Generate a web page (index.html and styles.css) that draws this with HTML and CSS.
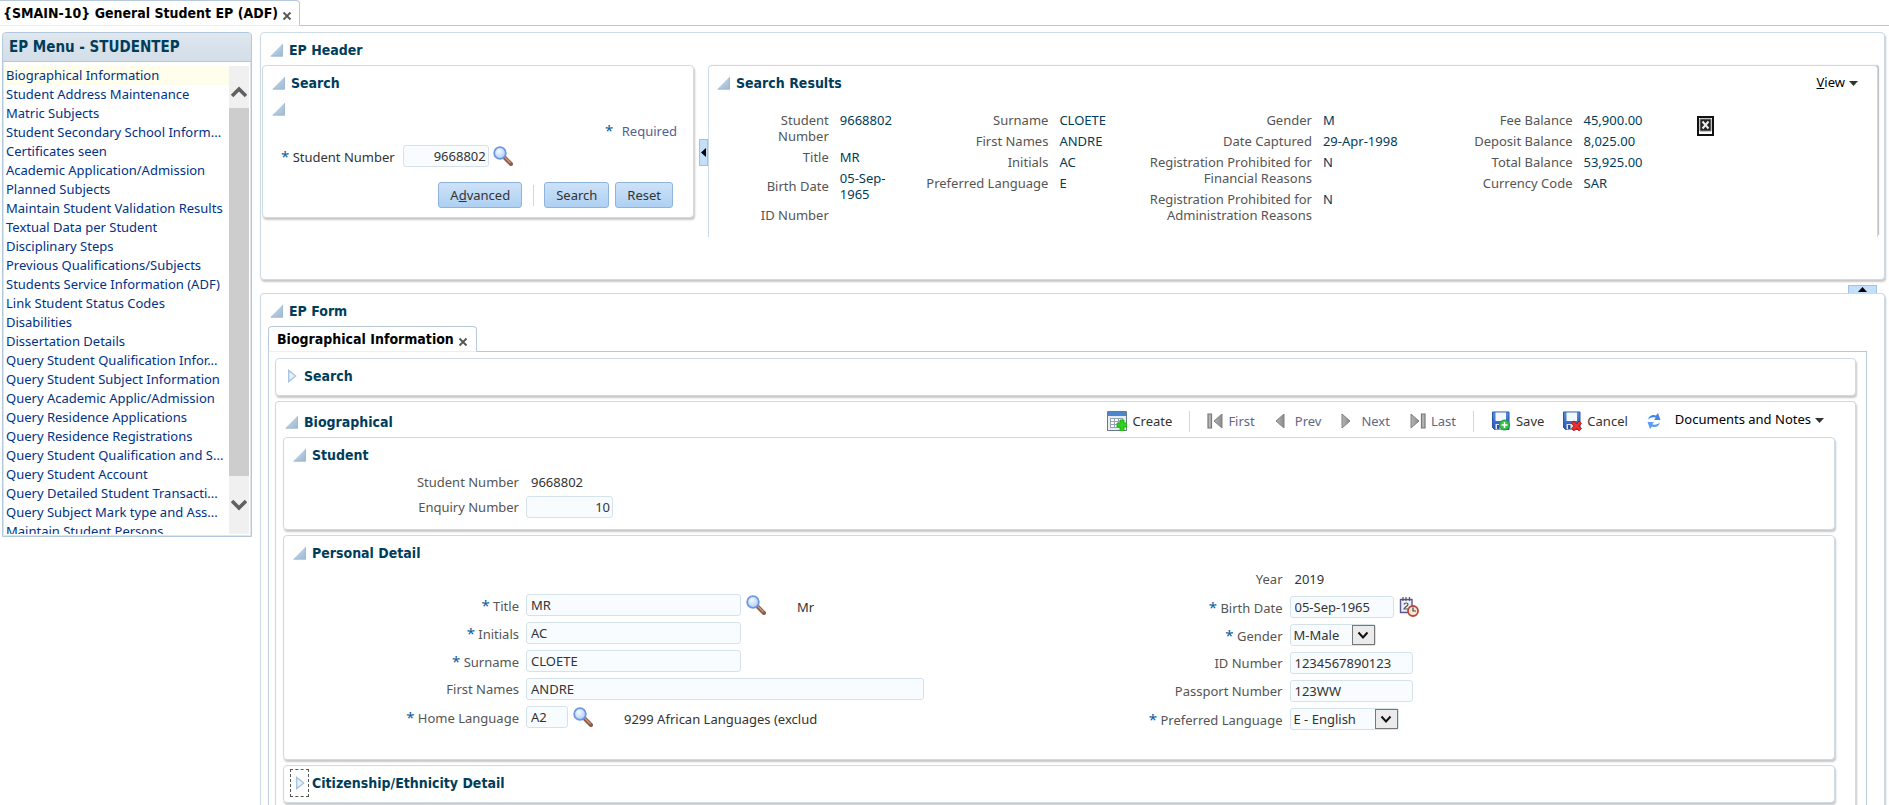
FILE: index.html
```html
<!DOCTYPE html>
<html lang="en">
<head>
<meta charset="utf-8">
<title>General Student EP (ADF)</title>
<link rel="stylesheet" href="styles.css">
</head>
<body>
<svg class="defs" aria-hidden="true">
  <defs>
    <linearGradient id="g-tri" x1="0" y1="0" x2="1" y2="1"><stop offset="0.3" stop-color="#b9d5ee"/><stop offset="1" stop-color="#a3b6c6"/></linearGradient>
    <linearGradient id="g-disk" x1="0" y1="0" x2="0" y2="1"><stop offset="0" stop-color="#5b8fe0"/><stop offset="1" stop-color="#2253b4"/></linearGradient>
    <radialGradient id="g-lens" cx="0.4" cy="0.35" r="0.7"><stop offset="0" stop-color="#f4f9ff"/><stop offset="1" stop-color="#a9cbf8"/></radialGradient>
    <linearGradient id="g-nav" x1="0" y1="0" x2="1" y2="0"><stop offset="0" stop-color="#b4b4b4"/><stop offset="1" stop-color="#8c8c8c"/></linearGradient>
  </defs>
  <symbol id="i-open" viewBox="0 0 13 13"><path d="M13 0V13H0Z" fill="url(#g-tri)"/><path d="M12.5 1V12.5H1" fill="none" stroke="#9dbbd8"/></symbol>
  <symbol id="i-closed" viewBox="0 0 13 15"><path d="M3.5 1.5V13.5L11 7.500Z" fill="#eef1f4" stroke="#a3c3e4" stroke-width="1.400"/></symbol>
  <symbol id="i-x" viewBox="0 0 10 10"><path d="M1.500 1.500L8.500 8.500M8.500 1.500L1.500 8.500" stroke="#555" stroke-width="1.800"/></symbol>
  <symbol id="i-lens" viewBox="0 0 20 20"><path d="M11.500 11.500L18 18" stroke="#8d5a48" stroke-width="4" stroke-linecap="round"/><path d="M12 11.500L17.500 17" stroke="#c99a86" stroke-width="1.300"/><circle cx="7" cy="7" r="5.800" fill="url(#g-lens)" stroke="#6f96e0" stroke-width="1.800"/></symbol>
  <symbol id="i-caret" viewBox="0 0 9 5"><path d="M0 0H9L4.500 5Z" fill="#333"/></symbol>
  <symbol id="i-create" viewBox="0 0 20 20"><path d="M.5 .5H19.500V19.500H.5Z" fill="#e8edf2" stroke="#66788a"/><path d="M1 1H19V5H1Z" fill="#4d86cc"/><path d="M3 7H16V17H3Z" fill="#fff"/><path d="M3 7.500H16M3 10.500H16M3 13.500H16M3 16.500H14M3.500 7V17M7.500 7V17M11.500 7V17M15.500 7V11" stroke="#94a3b3"/><path d="M13 9H17V12H20V16H17V20H13V16H10V12H13Z" fill="#2fd11b" stroke="#1ba50e" stroke-width=".8"/></symbol>
  <symbol id="i-first" viewBox="0 0 16 16"><path d="M1 1H4.500V15H1Z" fill="#b4b4b4" stroke="#777" stroke-width="1.200"/><path d="M15 1V15L7 8Z" fill="url(#g-nav)" stroke="#808080"/></symbol>
  <symbol id="i-last" viewBox="0 0 16 16"><path d="M11.500 1H15V15H11.500Z" fill="#b4b4b4" stroke="#777" stroke-width="1.200"/><path d="M1 1V15L9 8Z" fill="url(#g-nav)" stroke="#808080"/></symbol>
  <symbol id="i-prev" viewBox="0 0 10 16"><path d="M9 1V15L1 8Z" fill="url(#g-nav)" stroke="#808080"/></symbol>
  <symbol id="i-next" viewBox="0 0 10 16"><path d="M1 1V15L9 8Z" fill="url(#g-nav)" stroke="#808080"/></symbol>
  <symbol id="i-disk" viewBox="0 0 19 20"><path d="M1 1H17.500V18.500H3L1 16.500Z" fill="url(#g-disk)" stroke="#2a55a8"/><path d="M4 1.500H14.500V10H4Z" fill="#f3f8ff"/><path d="M4 13H12V18.500H4Z" fill="#dfe5ee"/><path d="M5.500 14H8V18H5.500Z" fill="#2b4f9e"/></symbol>
  <symbol id="i-refresh" viewBox="0 0 16 18"><path d="M2 7.500C3 3.500 7 2 10 3.500L12 1L14.500 8H8L9.800 5.800C7 4.800 4.500 5.500 2 7.500Z" fill="#3f86ec"/><path d="M14 10.500C13 14.500 9 16 6 14.500L4 17L1.500 10H8L6.200 12.200C9 13.200 11.500 12.500 14 10.500Z" fill="#5b9cf4"/></symbol>
  <symbol id="i-date" viewBox="0 0 20 20"><path d="M1.500 2.500H13V15.500H1.500Z" fill="#eeeef8" stroke="#565a94" stroke-width="1.400"/><path d="M4 0V4M7 0V4M10.500 0V4" stroke="#555" stroke-width="1.200"/><path d="M5 7.500C5.500 5.500 9 5.500 9 7.500C9 9 5.500 10 5 12H9" fill="none" stroke="#555" stroke-width="1.200"/><circle cx="14" cy="14" r="5" fill="#fbe9d4" stroke="#b44a3c" stroke-width="1.800"/><path d="M14 10.500V14H17" fill="none" stroke="#444" stroke-width="1.200"/></symbol>
  <symbol id="i-broken" viewBox="0 0 17 20"><path d="M1 1H16V19H1Z" fill="#fff" stroke="#111" stroke-width="2"/><path d="M3 3H14V15H3Z" fill="#222" stroke="#888"/><path d="M5.500 5.500L11.500 12.500M11.500 5.500L5.500 12.500" stroke="#eee" stroke-width="2"/></symbol>
  <symbol id="i-up" viewBox="0 0 16 12"><path d="M1 10L8 3L15 10" fill="none" stroke="#606060" stroke-width="3.600"/></symbol>
  <symbol id="i-down" viewBox="0 0 16 12"><path d="M1 2L8 9L15 2" fill="none" stroke="#606060" stroke-width="3.600"/></symbol>
  <symbol id="i-drop" viewBox="0 0 12 8"><path d="M1.500 1.500L6 6.500L10.500 1.500" fill="none" stroke="#111" stroke-width="2"/></symbol>
</svg>

<div class="tabs">
  <div class="tab tab-page"><span>{SMAIN-10} General Student EP (ADF)</span><button class="plain" aria-label="Close page"><svg class="x"><use href="#i-x"/></svg></button></div>
  <div class="tab-rest"></div>
</div>

<div class="page">
  <nav class="menu" aria-labelledby="menu-title">
    <h1 id="menu-title">EP Menu - STUDENTEP</h1>
    <div class="menu-body">
      <ul>
        <li class="current"><a href="#">Biographical Information</a></li>
        <li><a href="#">Student Address Maintenance</a></li>
        <li><a href="#">Matric Subjects</a></li>
        <li><a href="#">Student Secondary School Inform...</a></li>
        <li><a href="#">Certificates seen</a></li>
        <li><a href="#">Academic Application/Admission</a></li>
        <li><a href="#">Planned Subjects</a></li>
        <li><a href="#">Maintain Student Validation Results</a></li>
        <li><a href="#">Textual Data per Student</a></li>
        <li><a href="#">Disciplinary Steps</a></li>
        <li><a href="#">Previous Qualifications/Subjects</a></li>
        <li><a href="#">Students Service Information (ADF)</a></li>
        <li><a href="#">Link Student Status Codes</a></li>
        <li><a href="#">Disabilities</a></li>
        <li><a href="#">Dissertation Details</a></li>
        <li><a href="#">Query Student Qualification Infor...</a></li>
        <li><a href="#">Query Student Subject Information</a></li>
        <li><a href="#">Query Academic Applic/Admission</a></li>
        <li><a href="#">Query Residence Applications</a></li>
        <li><a href="#">Query Residence Registrations</a></li>
        <li><a href="#">Query Student Qualification and S...</a></li>
        <li><a href="#">Query Student Account</a></li>
        <li><a href="#">Query Detailed Student Transacti...</a></li>
        <li><a href="#">Query Subject Mark type and Ass...</a></li>
        <li><a href="#">Maintain Student Persons</a></li>
      </ul>
      <div class="scroll">
        <button class="plain scroll-up" aria-label="Scroll up"><svg><use href="#i-up"/></svg></button>
        <div class="thumb"></div>
        <button class="plain scroll-down" aria-label="Scroll down"><svg><use href="#i-down"/></svg></button>
      </div>
    </div>
  </nav>

  <main>
    <section class="panel ep-header">
      <h2><button class="plain" aria-label="Collapse EP Header"><svg class="tri"><use href="#i-open"/></svg></button>EP Header</h2>
      <div class="split">
        <form class="panel search">
          <h2><button type="button" class="plain" aria-label="Collapse Search"><svg class="tri"><use href="#i-open"/></svg></button>Search</h2>
          <div class="sub"><button type="button" class="plain" aria-label="Collapse criteria"><svg class="tri"><use href="#i-open"/></svg></button></div>
          <p class="required"><b>*</b> Required</p>
          <div class="criteria">
            <label for="q-student"><b>*</b> Student Number</label>
            <input id="q-student" class="num" value="9668802">
            <button type="button" class="plain" aria-label="Look up student number"><svg class="lens"><use href="#i-lens"/></svg></button>
          </div>
          <div class="buttons">
            <button type="button"><span>A<u>d</u>vanced</span></button>
            <i class="sep"></i>
            <button type="button">Search</button>
            <button type="button">Reset</button>
          </div>
        </form>
        <div class="splitter"><button class="plain" aria-label="Collapse search pane"><svg viewBox="0 0 5 9"><path d="M5 0V9L0 4.500Z"/></svg></button></div>
        <section class="panel results">
          <div class="head">
            <h2><button class="plain" aria-label="Collapse Search Results"><svg class="tri"><use href="#i-open"/></svg></button>Search Results</h2>
            <button class="plain dropdown"><span><u>V</u>iew</span><svg class="caret"><use href="#i-caret"/></svg></button>
          </div>
          <div class="facts">
            <dl class="c1">
              <div><dt>Student Number</dt><dd>9668802</dd></div>
              <div><dt>Title</dt><dd>MR</dd></div>
              <div class="mid"><dt>Birth Date</dt><dd>05-Sep-1965</dd></div>
              <div><dt>ID Number</dt><dd></dd></div>
            </dl>
            <dl class="c2">
              <div><dt>Surname</dt><dd>CLOETE</dd></div>
              <div><dt>First Names</dt><dd>ANDRE</dd></div>
              <div><dt>Initials</dt><dd>AC</dd></div>
              <div><dt>Preferred Language</dt><dd>E</dd></div>
            </dl>
            <dl class="c3">
              <div><dt>Gender</dt><dd>M</dd></div>
              <div><dt>Date Captured</dt><dd>29-Apr-1998</dd></div>
              <div><dt>Registration Prohibited for Financial Reasons</dt><dd>N</dd></div>
              <div><dt>Registration Prohibited for Administration Reasons</dt><dd>N</dd></div>
            </dl>
            <dl class="c4">
              <div><dt>Fee Balance</dt><dd>45,900.00</dd></div>
              <div><dt>Deposit Balance</dt><dd>8,025.00</dd></div>
              <div><dt>Total Balance</dt><dd>53,925.00</dd></div>
              <div><dt>Currency Code</dt><dd>SAR</dd></div>
            </dl>
            <div class="photo"><svg role="img" aria-label="Photo not available"><use href="#i-broken"/></svg></div>
          </div>
        </section>
      </div>
    </section>

    <div class="fold"><button class="plain" aria-label="Collapse header pane"><svg viewBox="0 0 9 5"><path d="M0 5H9L4.500 0Z"/></svg></button></div>

    <section class="panel ep-form">
      <h2><button class="plain" aria-label="Collapse EP Form"><svg class="tri"><use href="#i-open"/></svg></button>EP Form</h2>
      <div class="form-area">
        <div class="tabs">
          <div class="tab tab-form"><span>Biographical Information</span><button class="plain" aria-label="Close tab"><svg class="x"><use href="#i-x"/></svg></button></div>
          <div class="tab-rest"></div>
        </div>
        <div class="tab-body">
          <section class="panel closed">
            <h2><button class="plain" aria-label="Expand Search"><svg class="tri"><use href="#i-closed"/></svg></button>Search</h2>
          </section>

          <section class="panel bio">
            <div class="head bar">
              <h2><button class="plain" aria-label="Collapse Biographical"><svg class="tri"><use href="#i-open"/></svg></button>Biographical</h2>
              <div class="toolbar" role="toolbar" aria-label="Record actions">
                <button class="plain t-create"><svg class="w20"><use href="#i-create"/></svg>Create</button>
                <i class="sep"></i>
                <div class="nav">
                  <button class="plain" disabled><svg class="w16"><use href="#i-first"/></svg>First</button>
                  <button class="plain slim" disabled><svg class="w10"><use href="#i-prev"/></svg>Prev</button>
                  <button class="plain slim" disabled><svg class="w10"><use href="#i-next"/></svg>Next</button>
                  <button class="plain" disabled><svg class="w16"><use href="#i-last"/></svg>Last</button>
                </div>
                <i class="sep"></i>
                <div class="edit">
                  <button class="plain"><svg class="w20" viewBox="0 0 19 20"><use href="#i-disk"/><circle cx="13" cy="14" r="5" fill="#34c04c" stroke="#1c9c34"/><path d="M13 11V17M10 14H16" stroke="#fff" stroke-width="1.500"/></svg>Save</button>
                  <button class="plain"><svg class="w20" viewBox="0 0 19 20"><use href="#i-disk"/><path d="M10 11L18 19M18 11L10 19" stroke="#b51616" stroke-width="4"/><path d="M10.500 11.500L17.500 18.500M17.500 11.500L10.500 18.500" stroke="#f03232" stroke-width="2.400"/></svg>Cancel</button>
                  <button class="plain" aria-label="Refresh"><svg class="w16 tall"><use href="#i-refresh"/></svg></button>
                </div>
                <button class="plain dropdown docs"><span>Documents and Notes</span><svg class="caret"><use href="#i-caret"/></svg></button>
              </div>
            </div>

            <section class="panel student">
              <h2><button class="plain" aria-label="Collapse Student"><svg class="tri"><use href="#i-open"/></svg></button>Student</h2>
              <div class="fields tight">
                <div class="field"><span class="label">Student Number</span><output>9668802</output></div>
                <div class="field"><label for="enquiry">Enquiry Number</label><input id="enquiry" class="num" value="10"></div>
              </div>
            </section>

            <section class="panel personal">
              <h2><button class="plain" aria-label="Collapse Personal Detail"><svg class="tri"><use href="#i-open"/></svg></button>Personal Detail</h2>
              <div class="columns">
                <div class="fields left">
                  <div class="field"><label for="title"><b>*</b> Title</label><input id="title" class="w-long" value="MR"><button class="plain" aria-label="Look up title"><svg class="lens"><use href="#i-lens"/></svg></button><output class="note">Mr</output></div>
                  <div class="field"><label for="initials"><b>*</b> Initials</label><input id="initials" class="w-long" value="AC"></div>
                  <div class="field"><label for="surname"><b>*</b> Surname</label><input id="surname" class="w-long" value="CLOETE"></div>
                  <div class="field"><label for="names">First Names</label><input id="names" class="w-full" value="ANDRE"></div>
                  <div class="field"><label for="lang"><b>*</b> Home Language</label><input id="lang" class="w-code" value="A2"><button class="plain" aria-label="Look up language"><svg class="lens"><use href="#i-lens"/></svg></button><output class="note">9299 African Languages (exclud</output></div>
                </div>
                <div class="fields right">
                  <div class="field"><span class="label">Year</span><output>2019</output></div>
                  <div class="field"><label for="birth"><b>*</b> Birth Date</label><input id="birth" class="w-date" value="05-Sep-1965"><button class="plain" aria-label="Pick a date"><svg class="lens"><use href="#i-date"/></svg></button></div>
                  <div class="field"><label for="gender"><b>*</b> Gender</label><span class="pick"><select id="gender" class="w-gender"><option>M-Male</option></select><span class="pick-btn"><svg><use href="#i-drop"/></svg></span></span></div>
                  <div class="field"><label for="idno">ID Number</label><input id="idno" class="w-id" value="1234567890123"></div>
                  <div class="field"><label for="passport">Passport Number</label><input id="passport" class="w-id" value="123WW"></div>
                  <div class="field"><label for="pref"><b>*</b> Preferred Language</label><span class="pick"><select id="pref" class="w-pref"><option>E - English</option></select><span class="pick-btn"><svg><use href="#i-drop"/></svg></span></span></div>
                </div>
              </div>
            </section>

            <section class="panel closed citizen">
              <h2><button class="plain focused" aria-label="Expand Citizenship/Ethnicity Detail"><svg class="tri"><use href="#i-closed"/></svg></button>Citizenship/Ethnicity Detail</h2>
            </section>
          </section>
        </div>
      </div>
    </section>
  </main>
</div>
</body>
</html>
```
FILE: styles.css
```css
* { box-sizing: border-box; }

body {
  margin: 0;
  height: 100vh;
  overflow: hidden;
  display: flex;
  flex-direction: column;
  background: #fff;
  color: #333;
  font: 13px/16px "Noto Sans", "Open Sans", sans-serif;
}

h1, h2, p, ul, dl, dt, dd { margin: 0; padding: 0; }
ul { list-style: none; }
svg { display: block; flex: none; }
button, input, select { font: inherit; color: inherit; margin: 0; }
.defs { position: absolute; width: 0; height: 0; }

.plain {
  display: flex;
  align-items: center;
  padding: 0;
  border: 0;
  background: none;
}

label b, .required b { color: #0b5a9c; font-weight: 400; font-size: 15px; }

/* Tabs */
.tabs { display: flex; flex: none; height: 26px; }
.tab {
  display: flex;
  align-items: center;
  gap: 4px;
  border: 1px solid #b9c9dc;
  border-bottom-color: #eee;
  border-radius: 0 4px 0 0;
  color: #000;
  font: bold 14px/24px "DejaVu Sans Condensed", "Open Sans", sans-serif;
}
.tab .plain { padding-top: 6px; }
.tab-page { padding: 0 7px 0 3px; border-left: 0; }
.tab-form { padding: 0 8px; border-radius: 4px 4px 0 0; }
.tab-rest { flex: 1; border-bottom: 1px solid #b9c5d9; }
.x { width: 10px; height: 10px; }

.page {
  flex: 1;
  min-height: 0;
  display: flex;
  align-items: flex-start;
  gap: 8px;
  padding: 6px 4px 0 2px;
}

/* Side menu */
.menu {
  flex: none;
  width: 250px;
  border: 1px solid #b4c8dc;
  border-radius: 4px 4px 0 0;
  box-shadow: inset 0 0 0 1px #dce6ee;
}
.menu h1 {
  height: 29px;
  padding-left: 6px;
  border-bottom: 1px solid #b8c8d8;
  border-radius: 4px 4px 0 0;
  background: linear-gradient(#dfe6ee, #d3dee8);
  color: #003d5b;
  font: bold 15px/28px "DejaVu Sans Condensed", "Open Sans", sans-serif;
}
.menu-body { display: flex; height: 474px; padding: 4px 2px 2px 1px; }
.menu ul { flex: 1; overflow: hidden; }
.menu li { height: 19px; padding-left: 2px; line-height: 19px; white-space: nowrap; }
.menu li.current { background: #fffdeb; }
.menu a { color: #003286; text-decoration: none; }
.scroll { width: 20px; display: flex; flex-direction: column; background: #f0f0f0; }
.scroll svg { width: 16px; height: 12px; }
.scroll .plain { justify-content: center; }
.scroll-up { height: 42px; padding-top: 10px; }
.scroll-down { height: 58px; }
.thumb { flex: 1; background: #cdcdcd; }

/* Panels */
main { flex: 1; min-width: 0; height: 100%; display: flex; flex-direction: column; }
.panel {
  border: 1px solid #ccdae6;
  border-radius: 4px;
  background: #fff;
  box-shadow: 1px 2px 2px #c8c8c8;
}
.panel h2 {
  display: flex;
  align-items: center;
  gap: 6px;
  height: 32px;
  padding: 3px 0 1px 9px;
  color: #003d5b;
  font: bold 14px/28px "DejaVu Sans Condensed", "Open Sans", sans-serif;
}
.tri { width: 13px; height: 14px; }
.head { display: flex; justify-content: space-between; align-items: center; }

.ep-header { flex: none; height: 248px; }
.split { display: flex; align-items: flex-start; padding: 0 6px 0 1px; }
.search { flex: none; width: 432px; height: 153px; }
.sub { height: 24px; padding: 4px 0 0 9px; }
.required { padding: 0 16px 0 0; text-align: right; color: #53618f; }
.required b { margin-right: 5px; }
.criteria { display: flex; align-items: center; padding: 6px 0 0 18px; }
.criteria input { width: 86px; margin: 0 4px 0 8px; }
.buttons {
  display: flex;
  justify-content: flex-end;
  align-items: center;
  gap: 6px;
  padding: 15px 20px 0 0;
}
.buttons button {
  height: 26px;
  padding: 0 11px;
  border: 1px solid #8fb4dc;
  border-radius: 3px;
  background: linear-gradient(#cde2f8, #aed0f2);
}
.sep { width: 1px; height: 21px; background: #ccd8e4; }
.buttons .sep { margin: 0 4px 0 5px; }

.splitter { width: 14px; padding: 74px 0 0 5px; }
.splitter .plain {
  width: 9px;
  height: 27px;
  justify-content: center;
  border: 1px solid #9cc2ea;
  background: #c4dffa;
}
.splitter svg { width: 5px; height: 9px; }

.results {
  flex: 1;
  min-width: 0;
  height: 172px;
  border-bottom: 0;
  border-radius: 4px 4px 0 0;
  box-shadow: 2px -1px 1px -1px #bbb;
}
.results h2 { padding-left: 8px; }
.dropdown { gap: 4px; color: #000; }
.results .dropdown { margin-right: 19px; }
.caret { width: 9px; height: 5px; margin-top: 3px; }

.facts {
  display: grid;
  grid-template-columns: 202fr 215fr 300fr 255fr 198fr;
  padding-top: 14px;
}
.facts dl { display: flex; flex-direction: column; gap: 5px; }
.facts dl div { display: grid; gap: 11px; }
.facts .mid { align-items: center; }
.facts dt { color: #555; text-align: right; }
.facts dd { color: #003d5b; }
.c1 div { grid-template-columns: 120fr 71fr; }
.c1 dt { padding-left: 44px; }
.c1 dd { padding-right: 14px; }
.c2 div { grid-template-columns: 138fr 66fr; }
.c3 div { grid-template-columns: 187fr 102fr; }
.c4 div { grid-template-columns: 148fr 96fr; }
.photo { padding: 4px 0 0 18px; }
.photo svg { width: 17px; height: 20px; }

.fold { flex: none; display: flex; justify-content: flex-end; height: 13px; padding: 5px 8px 0 0; }
.fold .plain {
  width: 29px;
  height: 8px;
  justify-content: center;
  border: 1px solid #9cc2ea;
  border-bottom: 0;
  background: #c4dffa;
}
.fold svg { width: 9px; height: 5px; }

.ep-form {
  flex: 1;
  min-height: 0;
  overflow: hidden;
  display: flex;
  flex-direction: column;
  border-bottom: 0;
  border-radius: 4px 4px 0 0;
}
.form-area { flex: 1; min-height: 0; display: flex; flex-direction: column; padding: 0 17px 0 7px; }
.tab-body {
  flex: 1;
  min-height: 0;
  display: flex;
  flex-direction: column;
  gap: 5px;
  padding: 6px 10px 0 6px;
  border: 1px solid #c0d0e0;
  border-width: 0 1px;
}
.closed { flex: none; height: 38px; }
.bio {
  flex: 1;
  display: flex;
  flex-direction: column;
  gap: 5px;
  padding: 0 20px 0 7px;
  border-bottom: 0;
  border-radius: 4px 4px 0 0;
}
.bar { height: 35px; margin: 0 0 -5px -7px; padding-top: 2px; }

/* Toolbar */
.toolbar { display: flex; align-items: center; padding: 1px 11px 0 0; }
.toolbar .plain { gap: 5px; }
.toolbar .sep { margin: 0 17px; }
.toolbar .dropdown { gap: 4px; }
.nav { display: flex; gap: 20px; }
.edit { display: flex; gap: 18px; }
.nav .slim { gap: 10px; }
.toolbar .plain:disabled { color: #5f6784; }
.toolbar .docs { margin: 0 0 5px 13px; }
.w20 { width: 20px; height: 20px; }
.w16 { width: 16px; height: 16px; }
.w10 { width: 10px; height: 16px; }
.w16.tall { height: 18px; }

/* Fields */
input, select {
  height: 22px;
  padding: 0 4px;
  border: 1px solid #d6e2ea;
  border-radius: 3px;
  background: #f8fcfe;
}
.num { text-align: right; padding-right: 2px; }
.lens { width: 20px; height: 20px; }

.fields { display: flex; flex-direction: column; gap: 6px; }
.tight { gap: 3px; padding: 1px 0 11px; }
.field { display: flex; align-items: center; gap: 5px; height: 22px; }
.field label, .field .label {
  flex: none;
  width: 235px;
  color: #555;
  text-align: right;
}
.field label + *, .field .label + * { margin-left: 2px; }
.field .label + output { margin-left: 7px; }
.tight input { width: 87px; }

.columns { display: grid; grid-template-columns: 770fr 781fr; padding-bottom: 29px; }
.left { justify-content: flex-end; padding-bottom: 2px; }
.right .label, .right label { width: 229px; }
.note { margin-left: 26px; padding-top: 4px; }
.w-long { width: 215px; }
.w-full { width: 398px; }
.w-code { width: 42px; }
.w-date { width: 104px; }
.w-id { width: 123px; }
.w-gender { width: 86px; }
.w-pref { width: 109px; }

.pick { position: relative; display: flex; }
.pick select { appearance: none; padding: 0 3px; }
.pick-btn {
  position: absolute;
  top: 1px;
  right: 1px;
  width: 23px;
  height: 20px;
  display: flex;
  align-items: center;
  justify-content: center;
  border: 1px solid #777;
  background: #ebebeb;
  pointer-events: none;
}
.pick-btn svg { width: 12px; height: 8px; }

.focused { outline: 1px dashed #555; outline-offset: 2px; }
.citizen .focused { padding: 4px 0; }
```
